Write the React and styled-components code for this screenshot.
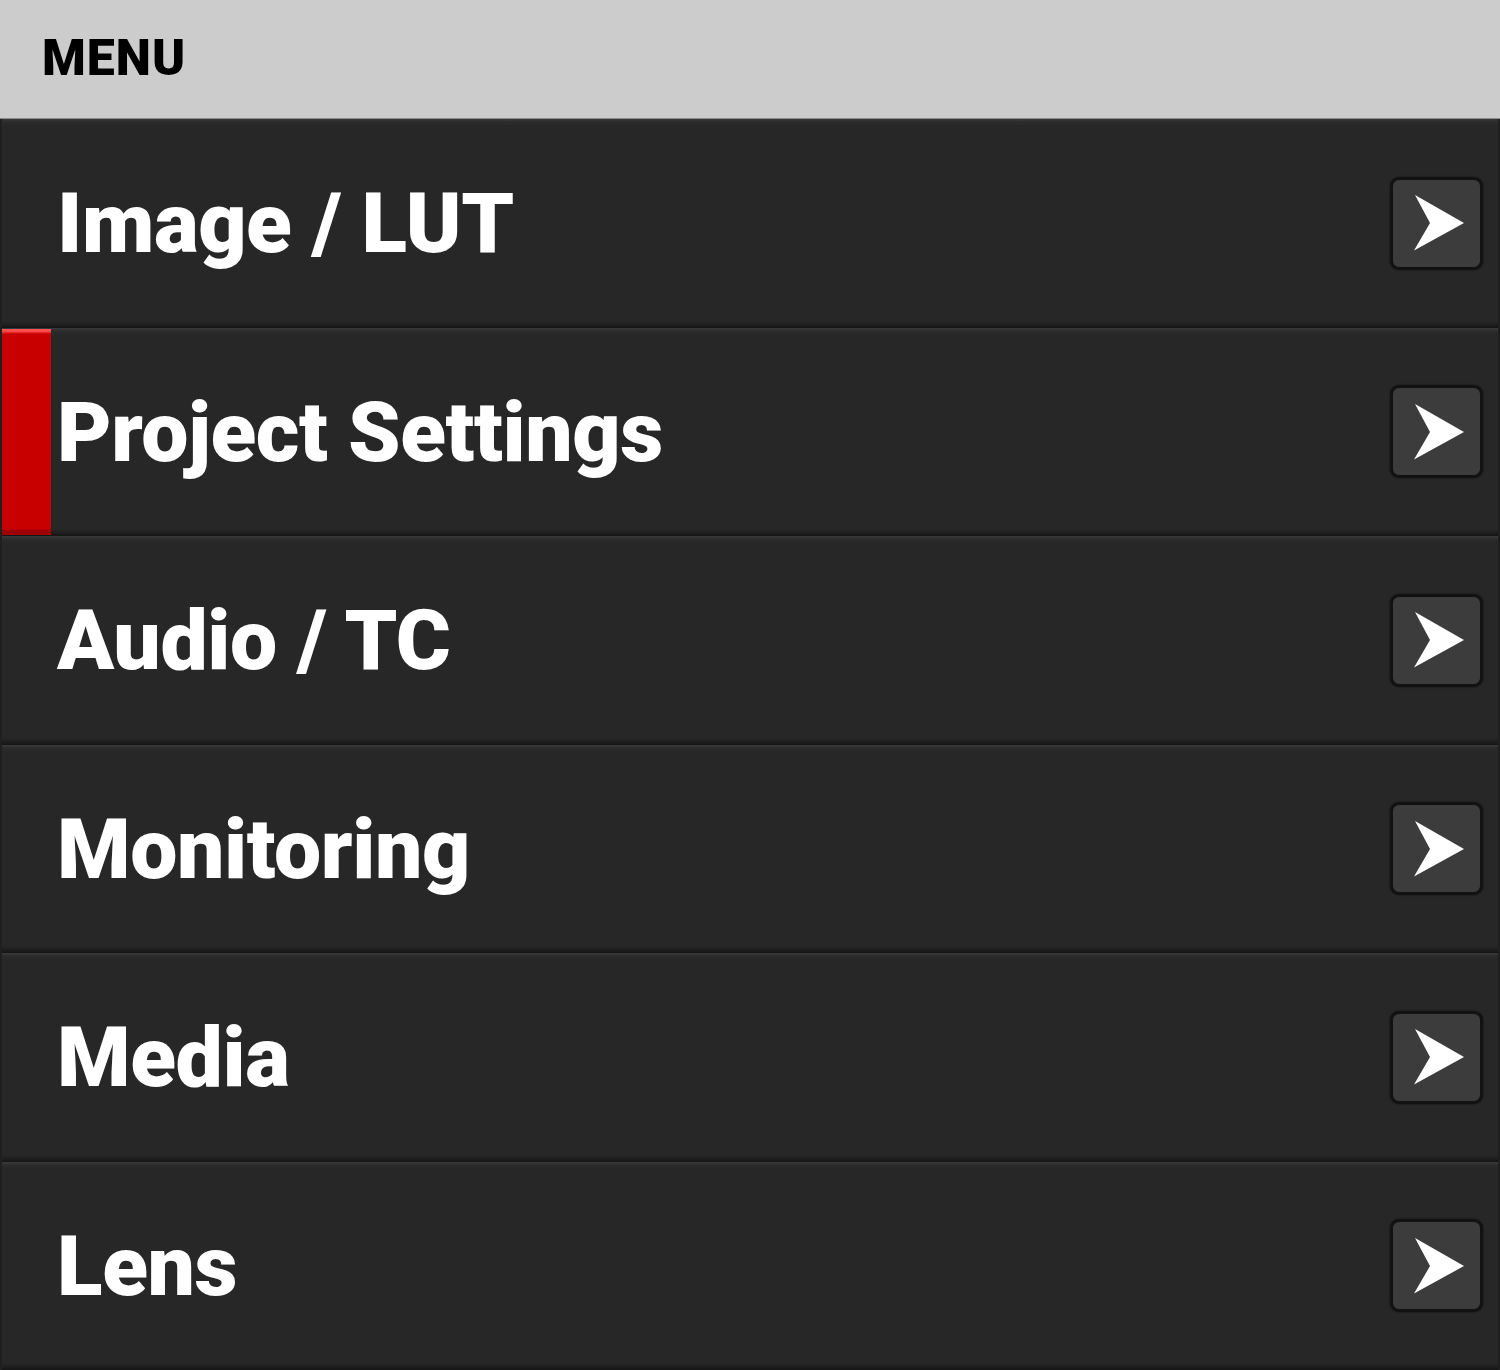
import React from "react";
import styled, { createGlobalStyle } from "styled-components";

const GlobalStyle = createGlobalStyle`
  html, body {
    margin: 0;
    padding: 0;
    background: #272727;
  }
  body {
    font-family: Roboto, "Liberation Sans", sans-serif;
  }
`;

const items = [
  { label: "Image / LUT" },
  { label: "Project Settings", active: true },
  { label: "Audio / TC" },
  { label: "Monitoring" },
  { label: "Media" },
  { label: "Lens" },
];

const App = () => {
  return (
    <>
      <GlobalStyle />
      <Screen>
        <Header>
          <Title>MENU</Title>
        </Header>
        <List>
          {items.map((item) => (
            <Row key={item.label}>
              {item.active && <ActiveMark />}
              <Label>{item.label}</Label>
              <ArrowButton aria-label={`Open ${item.label}`}>
                <svg width="50" height="56" viewBox="0 0 50 56">
                  <path d="M1 0 L50 28 L0 55.5 L16 28 Z" fill="#ffffff" />
                </svg>
              </ArrowButton>
            </Row>
          ))}
        </List>
      </Screen>
    </>
  );
};

const Screen = styled.div`
  width: 1500px;
  height: 1370px;
  display: flex;
  flex-direction: column;
  background: #272727;
  overflow: hidden;
`;

const Header = styled.div`
  height: 119px;
  flex: none;
  display: flex;
  align-items: center;
  padding-left: 42px;
  background: #cccccc;
  border-bottom: 1px solid #8a8a8a;
  box-sizing: border-box;
`;

const Title = styled.div`
  font-size: 50px;
  font-weight: 900;
  color: #000000;
  letter-spacing: 1px;
  margin-top: -2px;
`;

const List = styled.div`
  flex: 1;
  display: flex;
  flex-direction: column;
`;

const Row = styled.div`
  position: relative;
  flex: 1;
  display: flex;
  align-items: center;
  justify-content: space-between;
  padding: 0 15px 0 55px;
  background: linear-gradient(
    to bottom,
    #3a3a3a 0px,
    #2c2c2c 3px,
    #272727 7px,
    #272727 calc(100% - 7px),
    #1e1e1e calc(100% - 3px),
    #141414 100%
  );
  border-left: 2px solid #1f1f1f;
  border-right: 2px solid #1f1f1f;
`;

const ActiveMark = styled.div`
  position: absolute;
  left: 0;
  top: 1px;
  bottom: 1px;
  width: 49px;
  background: linear-gradient(
    to bottom,
    #ff5252 0px,
    #ff5252 2px,
    #c80000 5px,
    #c80000 calc(100% - 6px),
    #a00000 calc(100% - 5px),
    #a00000 100%
  );
`;

const Label = styled.div`
  position: relative;
  font-size: 84px;
  font-weight: 900;
  color: #ffffff;
  letter-spacing: -0.4px;
  line-height: 1;
  margin-top: 2px;
`;

const ArrowButton = styled.button`
  width: 93px;
  height: 93px;
  flex: none;
  display: flex;
  align-items: center;
  justify-content: center;
  padding: 0 0 0 4px;
  background: #3c3c3c;
  border: 3px solid #121212;
  border-radius: 9px;
  box-shadow: 0 0 2px rgba(0, 0, 0, 0.6);
  box-sizing: border-box;
  cursor: pointer;
`;

export default App;
